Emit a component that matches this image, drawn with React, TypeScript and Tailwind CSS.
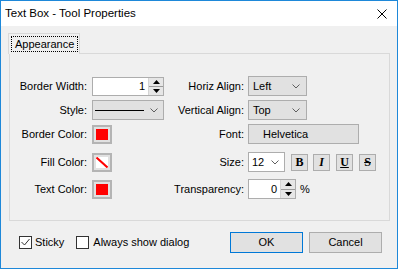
import React from "react";

const Chevron = () => (
  <svg width="8" height="5" viewBox="0 0 8 5" className="shrink-0">
    <polyline points="0.5,0.5 4,4 7.5,0.5" fill="none" stroke="#5f5f5f" strokeWidth="1" />
  </svg>
);

const Spin = () => (
  <div className="flex flex-col w-[15px] h-full shrink-0 border-l border-[#d4d4d4] bg-[#e6e6e6]">
    <div className="flex-1 flex items-center justify-center border-b border-[#9a9a9a]">
      <svg width="7" height="4" viewBox="0 0 7 4"><polygon points="0,4 3.5,0 7,4" fill="#000" /></svg>
    </div>
    <div className="flex-1 flex items-center justify-center">
      <svg width="7" height="4" viewBox="0 0 7 4"><polygon points="0,0 3.5,4 7,0" fill="#000" /></svg>
    </div>
  </div>
);

const Label = ({ children, w }: { children: React.ReactNode; w: string }) => (
  <div className={`${w} shrink-0 text-right`}>{children}</div>
);

const Swatch = ({ fill }: { fill?: boolean }) => (
  <div className="w-[20px] h-[19px] border-2 border-[#b4b4b4] bg-[#e1e1e1] flex items-center justify-center">
    {fill ? (
      <svg width="12" height="11" viewBox="0 0 12 11">
        <rect x="0" y="0" width="12" height="11" fill="#fff" />
        <line x1="0.5" y1="0.5" x2="11.5" y2="10.5" stroke="#ff0000" strokeWidth="2" />
      </svg>
    ) : (
      <div className="w-[12px] h-[11px] bg-[#ff0000]" />
    )}
  </div>
);

const StyleBtn = ({ children, cls, ml }: { children: React.ReactNode; cls: string; ml: string }) => (
  <div
    className={`${ml} w-[17px] h-[17px] border border-[#adadad] bg-[#e1e1e1] flex items-center justify-center font-['Liberation_Serif',serif] font-bold text-[12px] leading-none ${cls}`}
  >
    {children}
  </div>
);

export default function App() {
  return (
    <div className="w-[398px] h-[269px] border border-[#1e88d9] bg-[#f0f0f0] flex flex-col font-['Liberation_Sans',Arial,sans-serif] text-[11px] text-black overflow-hidden">
      {/* Title bar */}
      <div className="h-[25px] bg-white flex items-center justify-between pl-[4px] pr-[10px] shrink-0">
        <span className="text-[11.5px]">Text Box - Tool Properties</span>
        <svg width="10" height="10" viewBox="0 0 10 10">
          <line x1="0.5" y1="0.5" x2="9.5" y2="9.5" stroke="#000" strokeWidth="1" />
          <line x1="9.5" y1="0.5" x2="0.5" y2="9.5" stroke="#000" strokeWidth="1" />
        </svg>
      </div>

      {/* Tab */}
      <div className="mt-[7px] ml-[7px] relative z-10 -mb-px w-[72px] h-[21px] border border-b-0 border-[#d9d9d9] bg-[#f0f0f0] pl-[2px] pt-[2px]">
        <div className="w-[67px] h-[16px] border border-dotted border-black flex items-center pl-[3px]">
          Appearance
        </div>
      </div>

      {/* Panel */}
      <div className="ml-[8px] w-[381px] h-[168px] border border-[#d9d9d9] bg-[#f0f0f0] pt-[22px] flex flex-col">
        {/* Row 1 */}
        <div className="h-[20px] flex items-center">
          <Label w="w-[77px]">Border Width:</Label>
          <div className="ml-[5px] w-[78px] shrink-0">
            <div className="w-[72px] h-[19px] border border-[#adadad] bg-white flex items-stretch">
              <div className="flex-1 text-right pr-[3px] flex items-center justify-end">1</div>
              <Spin />
            </div>
          </div>
          <Label w="w-[74px]">Horiz Align:</Label>
          <div className="ml-[4px] w-[59px] h-[20px] border border-[#adadad] bg-[#e1e1e1] flex items-center justify-between pl-[4px] pr-[6px]">
            <span>Left</span>
            <Chevron />
          </div>
        </div>

        {/* Row 2 */}
        <div className="h-[20px] mt-[4px] flex items-center">
          <Label w="w-[77px]">Style:</Label>
          <div className="ml-[5px] w-[78px] shrink-0">
            <div className="w-[72px] h-[20px] border border-[#adadad] bg-[#e1e1e1] flex items-center justify-between pl-[2px] pr-[5px]">
              <div className="w-[49px] h-px bg-black" />
              <Chevron />
            </div>
          </div>
          <Label w="w-[74px]">Vertical Align:</Label>
          <div className="ml-[4px] w-[59px] h-[20px] border border-[#adadad] bg-[#e1e1e1] flex items-center justify-between pl-[4px] pr-[6px]">
            <span>Top</span>
            <Chevron />
          </div>
        </div>

        {/* Row 3 */}
        <div className="h-[20px] mt-[4px] flex items-center">
          <Label w="w-[77px]">Border Color:</Label>
          <div className="ml-[5px] w-[78px] shrink-0">
            <Swatch />
          </div>
          <Label w="w-[74px]">Font:</Label>
          <div className="ml-[4px] w-[111px] h-[20px] border border-[#adadad] bg-[#e1e1e1] flex items-center pl-[14px]">
            Helvetica
          </div>
        </div>

        {/* Row 4 */}
        <div className="h-[20px] mt-[8px] flex items-center">
          <Label w="w-[77px]">Fill Color:</Label>
          <div className="ml-[5px] w-[78px] shrink-0">
            <Swatch fill />
          </div>
          <Label w="w-[74px]">Size:</Label>
          <div className="ml-[4px] w-[37px] h-[20px] border border-[#adadad] bg-white flex items-center justify-between pl-[3px] pr-[5px]">
            <span>12</span>
            <Chevron />
          </div>
          <StyleBtn ml="ml-[6px]" cls="">B</StyleBtn>
          <StyleBtn ml="ml-[5px]" cls="italic">I</StyleBtn>
          <StyleBtn ml="ml-[6px]" cls="underline">U</StyleBtn>
          <StyleBtn ml="ml-[6px]" cls="line-through">S</StyleBtn>
        </div>

        {/* Row 5 */}
        <div className="h-[20px] mt-[7px] flex items-center">
          <Label w="w-[77px]">Text Color:</Label>
          <div className="ml-[5px] w-[78px] shrink-0">
            <Swatch />
          </div>
          <Label w="w-[74px]">Transparency:</Label>
          <div className="ml-[4px] w-[48px] h-[20px] border border-[#adadad] bg-white flex items-stretch">
            <div className="flex-1 flex items-center justify-end pr-[3px]">0</div>
            <Spin />
          </div>
          <span className="ml-[4px]">%</span>
        </div>
      </div>

      {/* Bottom */}
      <div className="mt-[11px] h-[21px] flex items-center pl-[18px] pr-[15px]">
        <div className="w-[13px] h-[13px] border border-[#333] bg-white flex items-center justify-center">
          <svg width="11" height="11" viewBox="0 0 11 11">
            <polyline points="1.5,5 4.5,8 9.5,2" fill="none" stroke="#333" strokeWidth="1" />
          </svg>
        </div>
        <span className="ml-[3px]">Sticky</span>
        <div className="ml-[12px] w-[13px] h-[13px] border border-[#333] bg-white" />
        <span className="ml-[4px]">Always show dialog</span>
        <div className="ml-auto flex gap-[6px]">
          <div className="w-[73px] h-[21px] border border-[#0078d7] bg-[#e1e1e1] flex items-center justify-center">OK</div>
          <div className="w-[73px] h-[21px] border border-[#adadad] bg-[#e1e1e1] flex items-center justify-center">Cancel</div>
        </div>
      </div>
    </div>
  );
}
